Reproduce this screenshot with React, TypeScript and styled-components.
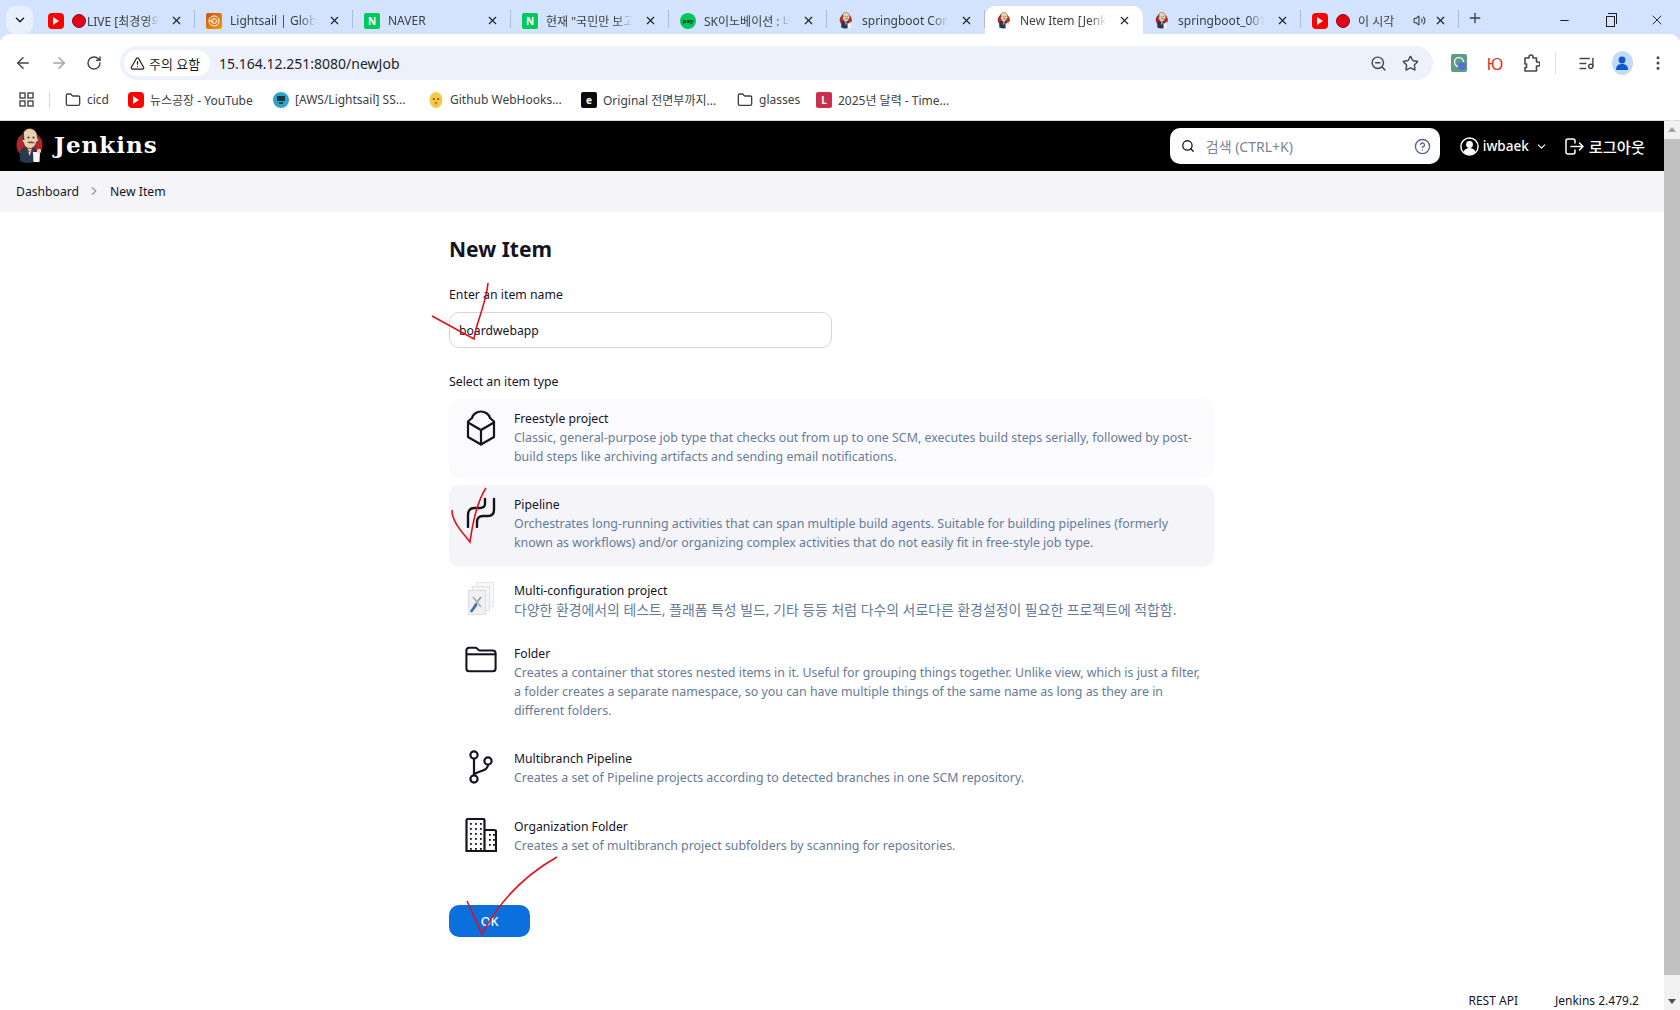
import React from 'react';
import styled, { createGlobalStyle } from 'styled-components';
import {
    ArrowLeft,
    ArrowRight,
    RotateCw,
    Star,
    Volume2,
    X,
    Plus,
    Minus,
    ChevronDown,
    ChevronRight,
    Search,
    CircleHelp,
    TriangleAlert,
    EllipsisVertical,
    ListMusic,
    ZoomOut,
    Folder,
} from 'lucide-react';

const FONT = `"Noto Sans", "Noto Sans CJK KR", sans-serif`;

const GlobalStyle = createGlobalStyle`
    html, body {
        margin: 0;
        padding: 0;
        height: 1010px;
        overflow: hidden;
        background: #fff;
        font-family: ${FONT};
    }
    * { box-sizing: border-box; }
`;

const Screen = styled.div`
    position: relative;
    width: 1680px;
    height: 1010px;
    display: flex;
    flex-direction: column;
    overflow: hidden;
`;

/* browser chrome */
const TabStrip = styled.div`
    height: 40px;
    flex: none;
    background: #d3e3fd;
    display: flex;
    align-items: flex-start;
    padding: 6px 0 0 6px;
`;

const TabSearch = styled.div`
    width: 27px;
    height: 28px;
    margin-right: 4px;
    border-radius: 9px;
    background: #e9f0fd;
    display: flex;
    align-items: center;
    justify-content: center;
    color: #1f1f1f;
`;

const Tab = styled.div<{ $active?: boolean }>`
    position: relative;
    width: 158px;
    height: 34px;
    flex: none;
    display: flex;
    align-items: center;
    padding: 0 11px 5px;
    gap: 8px;
    font-size: 12px;
    color: #3c4043;
    background: ${(p) => (p.$active ? '#fff' : 'transparent')};
    border-radius: ${(p) => (p.$active ? '10px 10px 0 0' : '0')};
`;

const TabSep = styled.span`
    position: absolute;
    right: 0;
    top: 4px;
    height: 18px;
    width: 1px;
    background: #a9bdd9;
`;

const TabTitle = styled.span`
    flex: 1;
    min-width: 0;
    white-space: nowrap;
    overflow: hidden;
    -webkit-mask-image: linear-gradient(90deg, #000 78%, transparent 96%);
    mask-image: linear-gradient(90deg, #000 78%, transparent 96%);
`;

const TabClose = styled(X)`
    flex: none;
    margin-right: 1px;
    color: #1f1f1f;
`;

const NewTab = styled.div`
    margin: 4px 0 0 8px;
    display: flex;
    color: #3c4043;
`;

const WindowButtons = styled.div`
    margin-left: auto;
    width: 122px;
    height: 28px;
    padding-right: 15px;
    display: flex;
    align-items: center;
    justify-content: space-between;
    color: #1f1f1f;
`;

const RestoreIcon = styled.span`
    position: relative;
    width: 9px;
    height: 11px;
    margin-top: 2px;
    border: 1.2px solid #1f1f1f;
    &::before {
        content: '';
        position: absolute;
        top: -4px;
        left: 1px;
        width: 8px;
        height: 10px;
        border: 1.2px solid #1f1f1f;
        border-left: none;
        border-bottom: none;
    }
`;

const Toolbar = styled.div`
    height: 46px;
    flex: none;
    background: #fff;
    border-radius: 10px 10px 0 0;
    margin-top: -6px;
    padding: 12px 0 0 14px;
    display: flex;
    align-items: center;
    position: relative;
`;

const NavButton = styled.div<{ $dim?: boolean; $width?: number }>`
    width: ${(p) => p.$width || 36}px;
    display: flex;
    justify-content: flex-start;
    color: ${(p) => (p.$dim ? '#a3a6a9' : '#474747')};
`;

const Omnibox = styled.div`
    width: 1313px;
    height: 34px;
    border-radius: 17px;
    background: #ecf1fb;
    padding: 0 14px 0 4px;
    display: flex;
    align-items: center;
`;

const SecurityChip = styled.div`
    width: 86px;
    height: 26px;
    flex: none;
    padding-left: 6px;
    border-radius: 13px;
    background: #fff;
    display: flex;
    align-items: center;
    gap: 4px;
    font-size: 13px;
    color: #1f1f1f;
`;

const UrlText = styled.div`
    margin-left: 9px;
    font-size: 14px;
    color: #1f1f1f;
    flex: 1;
`;

const OmniActions = styled.div`
    display: flex;
    gap: 15px;
    align-items: center;
    color: #474747;
`;

const ToolIcons = styled.div`
    margin-left: 8px;
    display: flex;
    align-items: center;
    color: #474747;
`;

const ToolSlot = styled.div<{ $width: number }>`
    width: ${(p) => p.$width}px;
    display: flex;
    justify-content: center;
    align-items: center;
`;

const ToolDivider = styled.span`
    width: 1px;
    height: 22px;
    background: #dde3ea;
    margin: 0 13px 0 6px;
`;

const CyrLetter = styled.span`
    color: #d9362b;
    font-size: 17px;
    line-height: 1;
`;

const Avatar = styled.span`
    width: 21px;
    height: 24px;
    border-radius: 50%;
    background: #c2dbfb;
    display: flex;
    align-items: center;
    justify-content: center;
`;

const Bookmarks = styled.div`
    height: 41px;
    flex: none;
    background: #fff;
    border-bottom: 1px solid #dadce0;
    display: flex;
    align-items: center;
    padding: 0 0 1px 19px;
    font-size: 12px;
    color: #3c4043;
`;

const AppsButton = styled.div`
    width: 30px;
    display: flex;
    color: #474747;
`;

const BarDivider = styled.span`
    width: 1px;
    height: 16px;
    background: #d5dae0;
    margin-right: 15px;
`;

const Bookmark = styled.div<{ $width: number }>`
    width: ${(p) => p.$width}px;
    flex: none;
    display: flex;
    align-items: center;
    gap: 6px;
    white-space: nowrap;
`;

const Favicon = styled.span<{ $bg: string; $round?: boolean; $radius?: number; $small?: boolean }>`
    width: 16px;
    height: 16px;
    flex: none;
    background: ${(p) => p.$bg};
    border-radius: ${(p) => (p.$round ? '50%' : `${p.$radius ?? 2}px`)};
    color: ${(p) => (p.$small ? '#14141f' : '#fff')};
    display: inline-flex;
    align-items: center;
    justify-content: center;
    font-size: ${(p) => (p.$small ? 6 : 10)}px;
    font-weight: 700;
    line-height: 1;
`;

const RecordDot = styled.span<{ $tight?: boolean }>`
    width: 14px;
    height: 14px;
    flex: none;
    margin-right: ${(p) => (p.$tight ? -7 : 0)}px;
    border-radius: 50%;
    background: #e2001a;
    border: 1px solid #8f0d1c;
`;

/* jenkins page */
const Viewport = styled.div`
    flex: 1;
    min-height: 0;
    display: flex;
`;

const Page = styled.div`
    flex: 1;
    min-width: 0;
    display: flex;
    flex-direction: column;
`;

const JenkinsBar = styled.header`
    height: 50px;
    flex: none;
    background: #000;
    color: #fff;
    display: flex;
    align-items: center;
    padding: 0 19px 0 16px;
`;

const BrandName = styled.div`
    margin: 0 0 3px 10px;
    font-family: 'DejaVu Serif', serif;
    font-weight: 700;
    font-size: 23px;
    letter-spacing: 1px;
`;

const SearchBox = styled.div`
    margin-left: auto;
    width: 270px;
    height: 36px;
    background: #fff;
    border-radius: 10px;
    display: flex;
    align-items: center;
    padding: 0 9px 0 11px;
    gap: 11px;
    font-size: 14px;
    color: #7b8494;
`;

const SearchHint = styled.span`
    flex: 1;
`;

const UserMenu = styled.div`
    margin-left: 20px;
    display: flex;
    align-items: center;
    gap: 4px;
    font-size: 13.5px;
    font-weight: 500;
`;

const MenuChevron = styled(ChevronDown)`
    margin: 0 3px 0 2px;
`;

const LogoutLink = styled.div`
    margin-left: 14px;
    display: flex;
    align-items: center;
    gap: 5px;
    font-size: 15.3px;
    font-weight: 500;
`;

const Crumbs = styled.nav`
    height: 41px;
    flex: none;
    background: #f4f4f9;
    display: flex;
    align-items: center;
    padding: 0 0 1px 16px;
    font-size: 12.2px;
    color: #14141f;
`;

const CrumbArrow = styled(ChevronRight)`
    color: #9a9aa3;
    margin: 0 9px 0 8px;
`;

const Main = styled.main`
    flex: 1;
    min-height: 0;
    padding: 22px 0 0 449px;
`;

const Title = styled.h1`
    margin: 0 0 22px;
    font-size: 21px;
    line-height: 30px;
    font-weight: 700;
    color: #14141f;
`;

const FieldLabel = styled.div`
    font-size: 12.3px;
    line-height: 18px;
    color: #14141f;
`;

const NameInput = styled.div`
    width: 383px;
    height: 36px;
    margin: 8px 0 25px;
    border: 1px solid #d5d5dc;
    border-radius: 10px;
    padding-left: 9px;
    display: flex;
    align-items: center;
    font-size: 12.2px;
    color: #14141f;
`;

const ItemList = styled.div`
    width: 765px;
    margin-top: 8px;
    display: flex;
    flex-direction: column;
`;

const ItemCard = styled.div<{
    $state?: 'soft' | 'hover';
    $pad: number;
    $bottom: number;
}>`
    border-radius: 10px;
    padding: ${(p) => p.$pad}px 8px ${(p) => p.$bottom}px 16px;
    margin-bottom: ${(p) => (p.$state === 'soft' ? 7 : 0)}px;
    display: flex;
    gap: 17px;
    background: ${(p) =>
        p.$state === 'hover'
            ? '#f4f4f9'
            : p.$state === 'soft'
              ? '#fbfbfd'
              : 'transparent'};
`;

const ItemIcon = styled.div`
    width: 32px;
    flex: none;
    padding-top: 1px;
    display: flex;
    justify-content: center;
    color: #14141f;
`;

const ItemText = styled.div`
    flex: 1;
    min-width: 0;
`;

const ItemName = styled.div`
    font-size: 12.2px;
    line-height: 19px;
    color: #14141f;
`;

const ItemDesc = styled.div<{ $cjk?: boolean }>`
    font-size: ${(p) => (p.$cjk ? 13.9 : 12.4)}px;
    line-height: 19px;
    color: #667b97;
`;

const OkButton = styled.div`
    width: 81px;
    height: 32px;
    margin-top: 50px;
    border-radius: 10px;
    background: #0b6fde;
    color: #fff;
    font-size: 12.5px;
    font-weight: 500;
    display: flex;
    align-items: center;
    justify-content: center;
`;

const Footer = styled.footer`
    height: 18px;
    flex: none;
    padding-right: 25px;
    display: flex;
    justify-content: flex-end;
    gap: 37px;
    font-size: 12px;
    line-height: 18px;
    color: #14141f;
`;

const ScrollTrack = styled.div`
    width: 16px;
    flex: none;
    background: #f1f1f1;
    position: relative;
    padding: 18px 0 35px;
    display: flex;
`;

const ScrollThumb = styled.div`
    width: 100%;
    background: #c1c1c1;
`;

const ScrollArrow = styled.span<{ $down?: boolean }>`
    position: absolute;
    left: 4px;
    ${(p) => (p.$down ? 'bottom: 6px;' : 'top: 6px;')}
    width: 0;
    height: 0;
    border-left: 4px solid transparent;
    border-right: 4px solid transparent;
    ${(p) =>
        p.$down ? 'border-top: 5px solid #505050;' : 'border-bottom: 5px solid #a3a3a3;'}
`;

const Scribbles = styled.svg`
    position: absolute;
    left: 0;
    top: 0;
    pointer-events: none;
`;

function JenkinsHead({ width = 16, height = 17 }: { width?: number; height?: number }) {
    return (
        <svg height={height} width={width} viewBox='0 0 28 36' style={{ flex: 'none' }}>
            <circle cx='13.5' cy='17' r='13' fill='#b8262b' />
            <path d='M4 33V25c0-4 4-7 9-7s8 3 8 7v8c-5 2.500-12 2.500-17 0z' fill='#28394f' />
            <path d='M11 18l2.500 10 3-10z' fill='#f4f1ec' />
            <path d='M11.500 21l2.500 2 2.500-2v4l-2.500-2-2.500 2z' fill='#c0272d' />
            <path
                d='M6.500 9c0-5 3-8.500 7-8.500 5 0 8 4 8 9.500 1.500 1 1 4-1 4-1 4-3.500 6.500-6.500 6.500-4 0-6-3-6.500-6-1.500-.5-2-3.500-1-5.500z'
                fill='#eccfb0'
                stroke='#3b2c25'
                strokeWidth='.8'
            />
            <path d='M6.500 12c-1-4 0-7 1.500-8 0 3 0 5 .5 8z' fill='#4a3a33' />
            <path d='M11 14.500c2-1.500 6-1.500 8 .5-2 .5-6 .5-8-.5z' fill='#6b4a3a' />
            <circle cx='12.500' cy='9.500' r='.9' fill='#2a211c' />
            <circle cx='17.500' cy='9.500' r='.9' fill='#2a211c' />
            <path d='M17 24h7l-.5 10h-6z' fill='#f7f5f0' />
            <circle cx='23' cy='23' r='2.200' fill='#eccfb0' />
        </svg>
    );
}

function YoutubeIcon() {
    return (
        <Favicon $bg='#f00' $radius={4}>
            <svg width='8' height='8' viewBox='0 0 8 8'>
                <path d='M1 0l6 4-6 4z' fill='#fff' />
            </svg>
        </Favicon>
    );
}

function LightsailIcon() {
    return (
        <Favicon $bg='linear-gradient(135deg,#c8511b,#ff9900)'>
            <svg width='12' height='12' viewBox='0 0 12 12' fill='none' stroke='#fff' strokeWidth='1'>
                <circle cx='6' cy='6' r='5' />
                <circle cx='6' cy='6' r='2.5' />
                <path d='M1 6h5' />
            </svg>
        </Favicon>
    );
}

function AwsIcon() {
    return (
        <Favicon $bg='#2ba6c6' $round>
            <svg width='10' height='10' viewBox='0 0 10 10'>
                <rect x='1' y='1' width='8' height='5' fill='#17384c' />
                <rect x='3' y='7' width='4' height='2' fill='#17384c' />
            </svg>
        </Favicon>
    );
}

function EmojiIcon() {
    return (
        <svg width='16' height='16' viewBox='0 0 16 16' style={{ flex: 'none' }}>
            <ellipse cx='8' cy='8' rx='6.5' ry='8' fill='#f7c948' />
            <circle cx='5.8' cy='7' r='1' fill='#6b4a12' />
            <circle cx='10.2' cy='7' r='1' fill='#6b4a12' />
            <circle cx='8' cy='11' r='1.5' fill='#e07a2f' />
        </svg>
    );
}

function AppsIcon() {
    return (
        <svg width='15' height='15' viewBox='0 0 15 15' fill='none' stroke='currentColor' strokeWidth='1.4'>
            <rect x='1' y='1' width='5' height='5' />
            <rect x='9' y='1' width='5' height='5' />
            <rect x='1' y='9' width='5' height='5' />
            <rect x='9' y='9' width='5' height='5' />
        </svg>
    );
}

function ExtensionBadge() {
    return (
        <svg width='17' height='18' viewBox='0 0 17 18'>
            <rect width='16' height='18' rx='2' fill='#5c9c86' />
            <circle cx='8' cy='8' r='4.5' fill='none' stroke='#e8f0f0' strokeWidth='1.4' />
            <circle cx='11' cy='12' r='4' fill='#5a6ed2' />
        </svg>
    );
}

function PuzzleIcon() {
    return (
        <svg width='17' height='18' viewBox='0 0 17 18' fill='none' stroke='currentColor' strokeWidth='1.6' strokeLinejoin='round'>
            <path d='M2 4h4V3a2 2 0 0 1 4 0v1h3.500v4H15a2 2 0 0 1 0 4h-1.500v5H2v-3.500h1.500V10H2z' />
        </svg>
    );
}

function FreestyleIcon() {
    return (
        <svg width='30' height='36' viewBox='0 0 30 36' fill='none' stroke='currentColor' strokeWidth='2.2' strokeLinejoin='round' strokeLinecap='round'>
            <path d='M6 8c1-4 5-6.500 9-6.500s8 2.500 9 6.500' />
            <path d='M6 8l-4 3.500V27l13 7.500L28 27V11.500L24 8' />
            <path d='M2 12.500l13 7.500 13-7.500M15 20v14.500' />
        </svg>
    );
}

function PipelineIcon() {
    return (
        <svg width='30' height='32' viewBox='0 -1 30 32' fill='none' stroke='currentColor' strokeWidth='2.4' strokeLinecap='round'>
            <path d='M28 2v11c0 4-2 6-6 6h-5c-4 0-6 2-6 6v5' />
            <path d='M19 2v5c0 3-2 4-5 4H8c-4 0-6 3-6 7v12' />
        </svg>
    );
}

function MultiConfigIcon() {
    return (
        <svg width='26' height='33' viewBox='0 0 26 33'>
            <rect x='8.500' y='.5' width='17' height='24' fill='#f8f8f8' stroke='#e6e6e6' />
            <rect x='4.500' y='4.500' width='17' height='24' fill='#f4f4f5' stroke='#e2e2e4' />
            <rect x='.5' y='8.500' width='17' height='24' fill='#eef0f2' stroke='#dcdfe2' />
            <path d='M13 15L6 24' stroke='#8f98a0' strokeWidth='1.6' />
            <path d='M5 15l8 10' stroke='#aab2b9' strokeWidth='1.6' />
            <path d='M3.500 29L8 23' stroke='#3f72b0' strokeWidth='2.8' strokeLinecap='round' />
        </svg>
    );
}

function FolderIcon() {
    return (
        <svg width='34' height='28' viewBox='0 0 34 28' fill='none' stroke='currentColor' strokeWidth='2.2' strokeLinejoin='round'>
            <path d='M1.500 5c0-2 1-3 3-3h7c1.500 0 2.500 3 4 3h14c2 0 3 1 3 3v16c0 2-1 3-3 3h-25c-2 0-3-1-3-3z' />
            <path d='M1.500 9h31' />
        </svg>
    );
}

function BranchIcon() {
    return (
        <svg width='26' height='34' viewBox='0 0 26 34' fill='none' stroke='currentColor' strokeWidth='2.2'>
            <circle cx='6' cy='5' r='3.600' />
            <circle cx='6' cy='29' r='3.600' />
            <circle cx='20' cy='11' r='3.600' />
            <path d='M6 8.600v16.800M20 14.600c0 6-6 5.400-14 9.400' />
        </svg>
    );
}

function OrgIcon() {
    const dots: React.ReactNode[] = [];
    for (let row = 0; row < 6; row += 1) {
        for (let col = 0; col < 3; col += 1) {
            dots.push(<rect key={`a${row}${col}`} x={5 + col * 5} y={5 + row * 5} width='1.8' height='1.8' fill='currentColor' stroke='none' />);
        }
    }
    for (let row = 0; row < 3; row += 1) {
        dots.push(<rect key={`b${row}`} x='24' y={16 + row * 5} width='1.8' height='1.8' fill='currentColor' stroke='none' />);
        dots.push(<rect key={`c${row}`} x='28' y={16 + row * 5} width='1.8' height='1.8' fill='currentColor' stroke='none' />);
    }
    return (
        <svg width='32' height='34' viewBox='0 0 32 34' fill='none' stroke='currentColor' strokeWidth='2.2'>
            <path d='M1.500 33V2.500c0-1 .5-1.500 1.500-1.500h15c1 0 1.500.5 1.500 1.500V33z' />
            <path d='M19.500 12h10c1 0 1.500.5 1.500 1.500V33H19.500M1 33h30' />
            {dots}
        </svg>
    );
}

function UserIcon() {
    return (
        <svg width='19' height='19' viewBox='0 0 19 19'>
            <circle cx='9.5' cy='9.5' r='8.6' fill='none' stroke='#fff' strokeWidth='1.5' />
            <circle cx='9.5' cy='7.5' r='3.4' fill='#fff' />
            <path d='M3.5 15c1-3 3.5-4 6-4s5 1 6 4c-3 3.500-9 3.500-12 0z' fill='#fff' />
        </svg>
    );
}

function LogoutIcon() {
    return (
        <svg width='19' height='19' viewBox='0 0 19 19' fill='none' stroke='#fff' strokeWidth='1.5' strokeLinecap='round' strokeLinejoin='round'>
            <path d='M8 17H3c-1 0-2-1-2-2V4c0-1 1-2 2-2h5c1 0 2 1 2 2v2M10 13v2c0 1-1 2-2 2' />
            <path d='M6 9.500h12M14.500 6l3.500 3.500-3.500 3.500' />
        </svg>
    );
}

const ITEMS = [
    {
        name: 'Freestyle project',
        desc: 'Classic, general-purpose job type that checks out from up to one SCM, executes build steps serially, followed by post-build steps like archiving artifacts and sending email notifications.',
        icon: <FreestyleIcon />,
        state: 'soft' as const,
        pad: 10,
        bottom: 12,
    },
    {
        name: 'Pipeline',
        desc: 'Orchestrates long-running activities that can span multiple build agents. Suitable for building pipelines (formerly known as workflows) and/or organizing complex activities that do not easily fit in free-style job type.',
        icon: <PipelineIcon />,
        state: 'hover' as const,
        pad: 10,
        bottom: 15,
    },
    {
        name: 'Multi-configuration project',
        desc: '다양한 환경에서의 테스트, 플래폼 특성 빌드, 기타 등등 처럼 다수의 서로다른 환경설정이 필요한 프로젝트에 적합함.',
        icon: <MultiConfigIcon />,
        cjk: true,
        pad: 14,
        bottom: 12,
    },
    {
        name: 'Folder',
        desc: 'Creates a container that stores nested items in it. Useful for grouping things together. Unlike view, which is just a filter, a folder creates a separate namespace, so you can have multiple things of the same name as long as they are in different folders.',
        icon: <FolderIcon />,
        pad: 13,
        bottom: 10,
    },
    {
        name: 'Multibranch Pipeline',
        desc: 'Creates a set of Pipeline projects according to detected branches in one SCM repository.',
        icon: <BranchIcon />,
        pad: 19,
        bottom: 12,
    },
    {
        name: 'Organization Folder',
        desc: 'Creates a set of multibranch project subfolders by scanning for repositories.',
        icon: <OrgIcon />,
        pad: 18,
        bottom: 0,
    },
];

const TABS = [
    { title: 'LIVE [최경영의 경제', icon: <YoutubeIcon />, dot: true },
    { title: 'Lightsail | Global Cloud', icon: <LightsailIcon /> },
    { title: 'NAVER', icon: <Favicon $bg='#03c75a'>N</Favicon> },
    { title: '현재 "국민만 보고 가', icon: <Favicon $bg='#03c75a'>N</Favicon> },
    { title: 'SK이노베이션 : 네이버', icon: <Favicon $bg='#03c75a' $round $small>pay</Favicon> },
    { title: 'springboot Console', icon: <JenkinsHead /> },
    { title: 'New Item [Jenkins]', icon: <JenkinsHead />, active: true },
    { title: 'springboot_001', icon: <JenkinsHead /> },
];

export default function App() {
    return (
        <Screen>
            <GlobalStyle />
            <TabStrip>
                <TabSearch>
                    <ChevronDown size={14} strokeWidth={2.5} />
                </TabSearch>
                {TABS.map((tab) => (
                    <Tab key={tab.title} $active={tab.active}>
                        {tab.icon}
                        {tab.dot && <RecordDot $tight />}
                        <TabTitle>{tab.title}</TabTitle>
                        <TabClose size={13} strokeWidth={2} />
                        {!tab.active && <TabSep />}
                    </Tab>
                ))}
                <Tab>
                    <YoutubeIcon />
                    <RecordDot />
                    <TabTitle>이 시각</TabTitle>
                    <Volume2 size={13} />
                    <TabClose size={13} strokeWidth={2} />
                    <TabSep />
                </Tab>
                <NewTab>
                    <Plus size={16} strokeWidth={2} />
                </NewTab>
                <WindowButtons>
                    <Minus size={13} />
                    <RestoreIcon />
                    <X size={16} strokeWidth={1.4} />
                </WindowButtons>
            </TabStrip>

            <Toolbar>
                <NavButton>
                    <ArrowLeft size={18} />
                </NavButton>
                <NavButton $dim>
                    <ArrowRight size={18} />
                </NavButton>
                <NavButton $width={34}>
                    <RotateCw size={16} strokeWidth={2.2} />
                </NavButton>
                <Omnibox>
                    <SecurityChip>
                        <TriangleAlert size={15} />
                        주의 요함
                    </SecurityChip>
                    <UrlText>15.164.12.251:8080/newJob</UrlText>
                    <OmniActions>
                        <ZoomOut size={17} />
                        <Star size={17} />
                    </OmniActions>
                </Omnibox>
                <ToolIcons>
                    <ToolSlot $width={36}>
                        <ExtensionBadge />
                    </ToolSlot>
                    <ToolSlot $width={36}>
                        <CyrLetter>Ю</CyrLetter>
                    </ToolSlot>
                    <ToolSlot $width={36}>
                        <PuzzleIcon />
                    </ToolSlot>
                    <ToolDivider />
                    <ToolSlot $width={34}>
                        <ListMusic size={17} />
                    </ToolSlot>
                    <ToolSlot $width={38}>
                        <Avatar>
                            <svg width='12' height='14' viewBox='0 0 12 14'>
                                <circle cx='6' cy='4' r='3.4' fill='#0b57d0' />
                                <path d='M0 14c0-4 2-6 6-6s6 2 6 6z' fill='#0b57d0' />
                            </svg>
                        </Avatar>
                    </ToolSlot>
                    <ToolSlot $width={34}>
                        <EllipsisVertical size={18} />
                    </ToolSlot>
                </ToolIcons>
            </Toolbar>

            <Bookmarks>
                <AppsButton>
                    <AppsIcon />
                </AppsButton>
                <BarDivider />
                <Bookmark $width={63}>
                    <Folder size={16} />
                    cicd
                </Bookmark>
                <Bookmark $width={145}>
                    <YoutubeIcon />
                    뉴스공장 - YouTube
                </Bookmark>
                <Bookmark $width={155}>
                    <AwsIcon />
                    [AWS/Lightsail] SS...
                </Bookmark>
                <Bookmark $width={153}>
                    <EmojiIcon />
                    Github WebHooks...
                </Bookmark>
                <Bookmark $width={156}>
                    <Favicon $bg='#0b0b0b'>e</Favicon>
                    Original 전면부까지...
                </Bookmark>
                <Bookmark $width={79}>
                    <Folder size={16} />
                    glasses
                </Bookmark>
                <Bookmark $width={150}>
                    <Favicon $bg='#c9304f'>L</Favicon>
                    2025년 달력 - Time...
                </Bookmark>
            </Bookmarks>

            <Viewport>
                <Page>
                    <JenkinsBar>
                        <JenkinsHead width={28} height={36} />
                        <BrandName>Jenkins</BrandName>
                        <SearchBox>
                            <Search size={14} color='#14141f' strokeWidth={2.2} />
                            <SearchHint>검색 (CTRL+K)</SearchHint>
                            <CircleHelp size={17} color='#5a6b85' />
                        </SearchBox>
                        <UserMenu>
                            <UserIcon />
                            iwbaek
                            <MenuChevron size={13} />
                        </UserMenu>
                        <LogoutLink>
                            <LogoutIcon />
                            로그아웃
                        </LogoutLink>
                    </JenkinsBar>
                    <Crumbs>
                        Dashboard
                        <CrumbArrow size={14} />
                        New Item
                    </Crumbs>
                    <Main>
                        <Title>New Item</Title>
                        <FieldLabel>Enter an item name</FieldLabel>
                        <NameInput>boardwebapp</NameInput>
                        <FieldLabel>Select an item type</FieldLabel>
                        <ItemList>
                            {ITEMS.map((item) => (
                                <ItemCard
                                    key={item.name}
                                    $state={item.state}
                                    $pad={item.pad}
                                    $bottom={item.bottom}
                                >
                                    <ItemIcon>{item.icon}</ItemIcon>
                                    <ItemText>
                                        <ItemName>{item.name}</ItemName>
                                        <ItemDesc $cjk={item.cjk}>{item.desc}</ItemDesc>
                                    </ItemText>
                                </ItemCard>
                            ))}
                        </ItemList>
                        <OkButton>OK</OkButton>
                    </Main>
                    <Footer>
                        <span>REST API</span>
                        <span>Jenkins 2.479.2</span>
                    </Footer>
                </Page>
                <ScrollTrack>
                    <ScrollArrow />
                    <ScrollThumb />
                    <ScrollArrow $down />
                </ScrollTrack>
            </Viewport>

            <Scribbles width='1680' height='1010' viewBox='0 0 1680 1010' fill='none' stroke='#e0101e' strokeWidth='1.6'>
                <path d='M432 316L474 339C476 322 486 305 488 283' />
                <path d='M452 510C452 522 462 532 470 542C473 520 478 500 486 488' />
                <path d='M467 901L482 934C500 900 525 875 557 857' />
            </Scribbles>
        </Screen>
    );
}
